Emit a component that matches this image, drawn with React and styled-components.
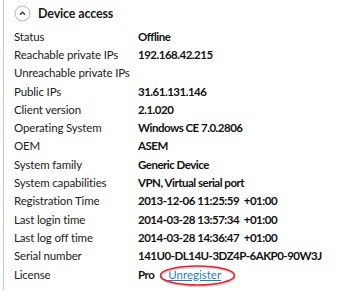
import React from 'react';
import styled, { createGlobalStyle } from 'styled-components';

const GlobalStyle = createGlobalStyle`
  html, body {
    margin: 0;
    padding: 0;
    background: #ffffff;
  }
  body {
    font-family: Lato, 'Noto Sans', sans-serif;
    color: #1e1e1e;
  }
`;

const rows = [
  ['Status', 'Offline'],
  ['Reachable private IPs', '192.168.42.215'],
  ['Unreachable private IPs', ''],
  ['Public IPs', '31.61.131.146'],
  ['Client version', '2.1.020'],
  ['Operating System', 'Windows CE 7.0.2806'],
  ['OEM', 'ASEM'],
  ['System family', 'Generic Device'],
  ['System capabilities', 'VPN, Virtual serial port'],
  ['Registration Time', '2013-12-06 11:25:59  +01:00'],
  ['Last login time', '2014-03-28 13:57:34  +01:00'],
  ['Last log off time', '2014-03-28 14:36:47  +01:00'],
  ['Serial number', '141U0-DL14U-3DZ4P-6AKP0-90W3J'],
];

const App = () => {
  return (
    <>
      <GlobalStyle />
      <Panel>
        <Header>
          <Toggle>
            <svg width='17' height='17' viewBox='0 0 17 17'>
              <circle cx='8.5' cy='8.5' r='7.5' fill='#fff' stroke='#b4b4b4' strokeWidth='1' />
              <path d='M6 9.6 L8.5 7.2 L11 9.6' fill='none' stroke='#444' strokeWidth='1.5' />
            </svg>
          </Toggle>
          <Title>Device access</Title>
        </Header>
        <Table>
          {rows.map(([label, value]) => (
            <Row key={label}>
              <Label>{label}</Label>
              <Value>{value}</Value>
            </Row>
          ))}
          <Row>
            <Label>License</Label>
            <Value>
              Pro
              <LinkWrap>
                <Link href='#'>Unregister</Link>
                <Circle width='80' height='26' viewBox='0 0 80 26'>
                  <ellipse cx='40' cy='14' rx='37' ry='9.5' fill='none' stroke='#cfcfcf' strokeWidth='1.5' />
                  <ellipse cx='39.5' cy='12.5' rx='37' ry='9.5' fill='none' stroke='#e3202b' strokeWidth='1.6' />
                </Circle>
              </LinkWrap>
            </Value>
          </Row>
        </Table>
      </Panel>
    </>
  );
};

const Panel = styled.div`
  margin-left: 3px;
  width: 343px;
  height: 290px;
  border-left: 1px solid #c6c6c6;
  box-sizing: border-box;
`;

const Header = styled.div`
  display: flex;
  align-items: center;
  gap: 7px;
  padding: 4px 0 0 10px;
  height: 19px;
`;

const Toggle = styled.div`
  width: 17px;
  height: 17px;
  svg {
    display: block;
  }
`;

const Title = styled.div`
  font-size: 12.5px;
  font-weight: 700;
  letter-spacing: -0.15px;
  color: #1a1a1a;
`;

const Table = styled.div`
  padding: 4px 0 0 10px;
  display: flex;
  flex-direction: column;
`;

const Row = styled.div`
  display: grid;
  grid-template-columns: 124px 1fr;
  height: 18.3px;
  align-items: center;
  font-size: 11.5px;
  white-space: pre;
`;

const Label = styled.div`
  color: #222;
  letter-spacing: -0.15px;
`;

const Value = styled.div`
  font-weight: 700;
  letter-spacing: -0.5px;
  color: #111;
  display: flex;
  align-items: center;
`;

const LinkWrap = styled.span`
  position: relative;
  margin-left: 14px;
`;

const Link = styled.a`
  color: #1a7fd0;
  font-weight: 400;
  letter-spacing: 0;
  text-decoration: underline;
`;

const Circle = styled.svg`
  position: absolute;
  left: -10px;
  top: -5px;
  pointer-events: none;
`;

export default App;
